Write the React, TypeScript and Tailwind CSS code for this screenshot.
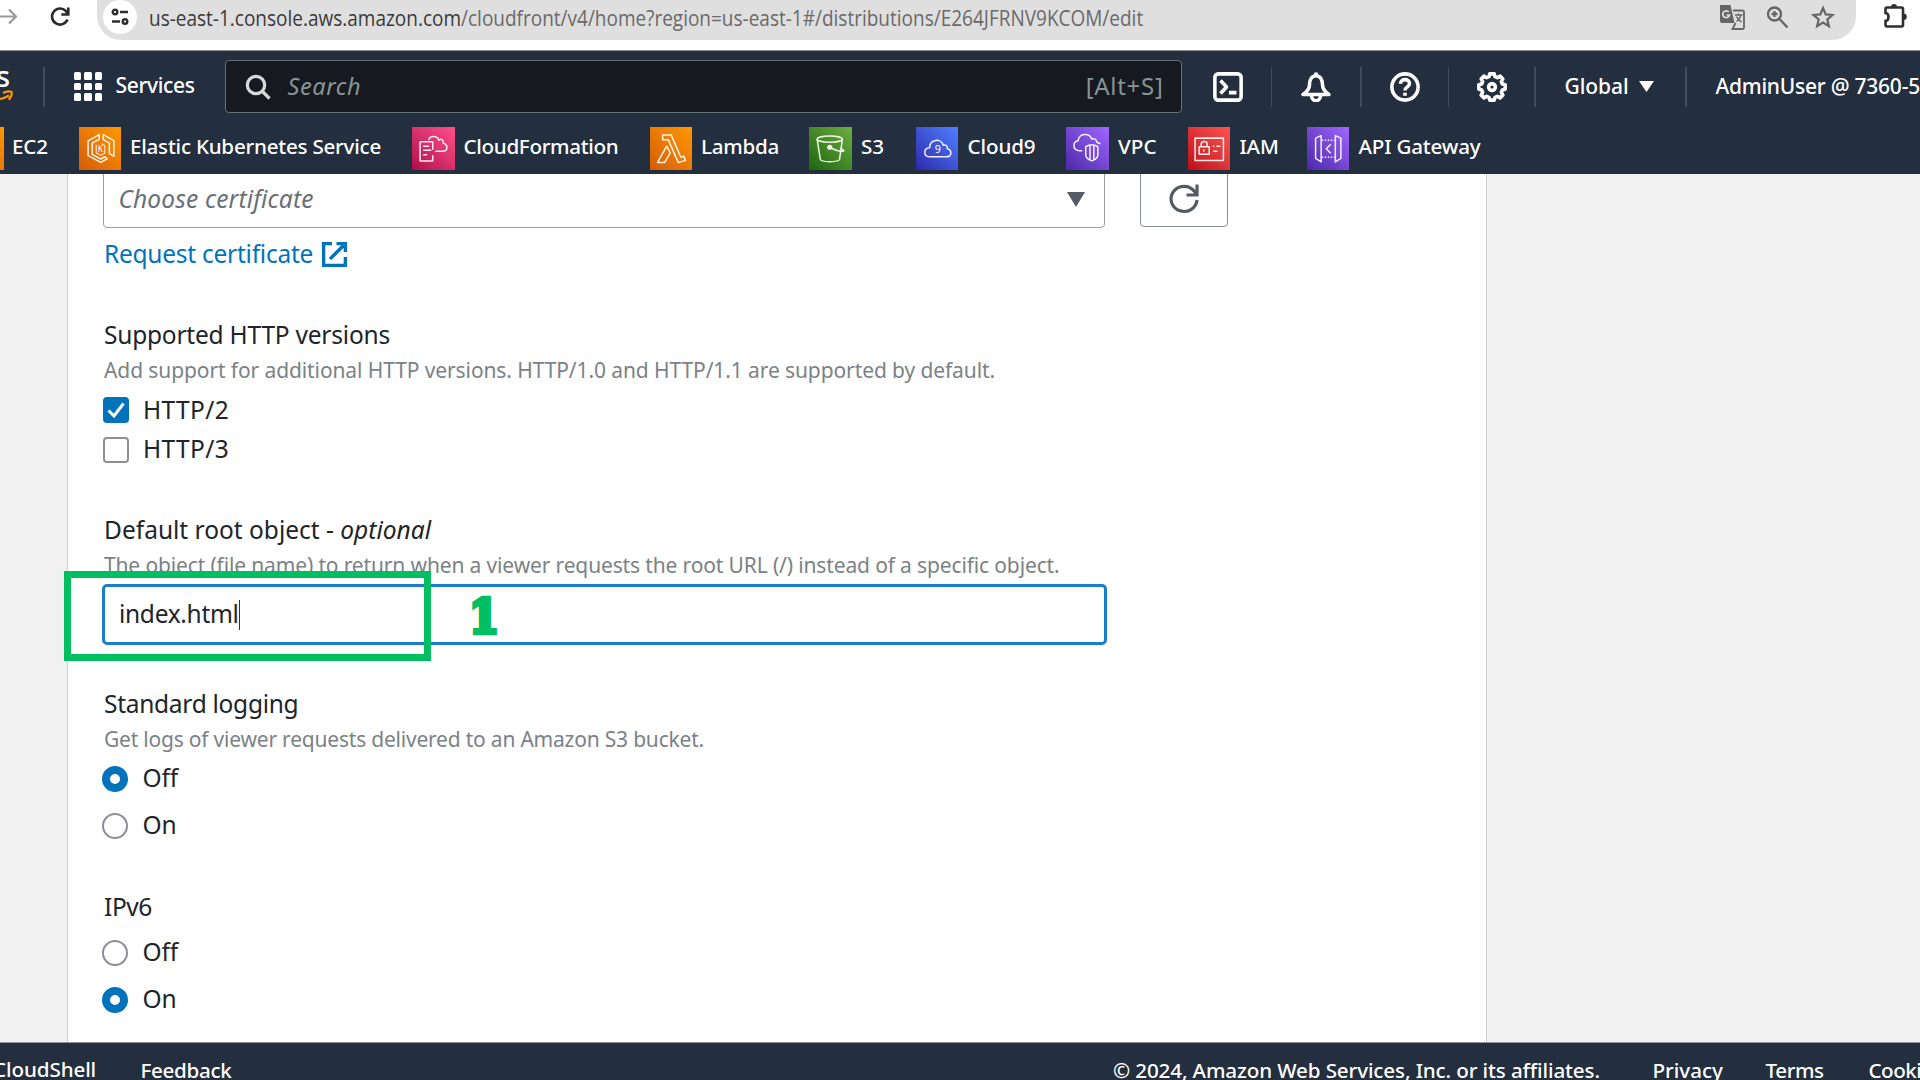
import type { ReactNode } from "react";

type Favorite = {
  label: string;
  item: string;
  tile: string;
  text: string;
  glyph: ReactNode;
};

const favorites: Favorite[] = [
  {
    label: "EC2",
    item: "w-[117.5px]",
    tile: "bg-linear-to-tr from-[#d45b07] to-[#ff9900]",
    text: "-translate-x-px tracking-[-0.1px]",
    glyph: <rect x="10" y="10" width="22" height="22" />,
  },
  {
    label: "Elastic Kubernetes Service",
    item: "w-[333.5px]",
    tile: "bg-linear-to-tr from-[#d45b07] to-[#ff9900]",
    text: "-translate-x-[0.5px] tracking-[-0.23px]",
    glyph: (
      <>
        <path d="M20 7.500 9 13.700v14.600l12.500 6.700 6.500-3.600-2.500-2-4 2.200-8.500-4.600V16l7-3.800z" />
        <path d="M24 7.500 34.500 13.500v15.500l-4.500-3V16l-6-3.500z" />
        <path d="M17 17.500v8l4.500 2.500 4-2.300v-7.500l-3-1.700" strokeWidth="1" />
        <text x="18.500" y="25" fontSize="8.500" fill="#fff" stroke="none" className="font-['Noto_Sans']">K</text>
      </>
    ),
  },
  {
    label: "CloudFormation",
    item: "w-[237.5px]",
    tile: "bg-linear-to-tr from-[#b0084d] to-[#ff4f8b]",
    text: "-translate-x-[0.5px] tracking-[-0.31px]",
    glyph: (
      <>
        <path d="M8 14.500h12.500v8M20.500 28v5.500H8v-19M11 19h6M11 23h8M11 27.500h4" />
        <path d="M16.500 13c1-4.500 8-5 10 0 3-2 4.500 0 4.500 3 5 1.500 4.500 8-.5 8H23" />
      </>
    ),
  },
  {
    label: "Lambda",
    item: "w-[159.5px]",
    tile: "bg-linear-to-tr from-[#d45b07] to-[#ff9900]",
    text: "-translate-x-[0.5px] tracking-[-0.27px]",
    glyph: (
      <>
        <path d="M12.500 8h8.500l9.500 22 3-1.200 1.500 4.200-7 2.200L18 12.500h-5.500z" />
        <path d="M16.500 19 7.500 35h7l5.500-9.500z" />
      </>
    ),
  },
  {
    label: "S3",
    item: "w-[106.5px]",
    tile: "bg-linear-to-tr from-[#1b660f] to-[#6cae3e]",
    text: "tracking-[-0.1px]",
    glyph: (
      <>
        <ellipse cx="20.500" cy="12" rx="12.500" ry="3" />
        <path d="M8 12l3.200 20c1 3 18 3 19 0L33 12" />
        <circle cx="20.500" cy="20" r="1.800" fill="#fff" />
        <path d="M20.500 20c5 3 12 5 14 3.500-.5-1.300-2-2-3-2.500" />
      </>
    ),
  },
  {
    label: "Cloud9",
    item: "w-[150.5px]",
    tile: "bg-linear-to-tr from-[#2e27ad] to-[#527fff]",
    text: "tracking-[-0.11px]",
    glyph: (
      <>
        <path d="M14 29.500c-7 0-7-8.500-.5-9 0-9 11.500-9.500 13.500-2.500 2.500-1 4 .5 4 3.500 5 1.500 4.500 8-1 8z" />
        <text x="18.500" y="25.500" fontSize="10.500" fill="#fff" stroke="none" className="font-['Noto_Sans']">9</text>
      </>
    ),
  },
  {
    label: "VPC",
    item: "w-[121.5px]",
    tile: "bg-linear-to-tr from-[#4d27a8] to-[#a166ff]",
    text: "tracking-[0.1px]",
    glyph: (
      <>
        <path d="M16 23.500h-3c-7.500-1-6-9.500-1-10 1-7.500 11-8 13.500-1.500 3-1.200 4.500.5 5 3l3.500 1.500" />
        <path d="M19.500 19.500c4-2.500 8-2.500 12 0v8c0 3-3 5-6 6-3-1-6-3-6-6zM23.700 18v14.500M27.500 18v14.500" />
      </>
    ),
  },
  {
    label: "IAM",
    item: "w-[119px]",
    tile: "bg-linear-to-tr from-[#bd0816] to-[#ff5252]",
    text: "tracking-[-0.2px]",
    glyph: (
      <>
        <path d="M7 11h28v22H7z" />
        <path d="M11 19.500h10v7.500H11zM13 19.500v-2.500c0-3.500 6-3.500 6 0v2.500M15.500 22v2.500M24.500 19h1.500M28 19h4M25 24h4" />
      </>
    ),
  },
  {
    label: "API Gateway",
    item: "w-[200px]",
    tile: "bg-linear-to-tr from-[#4d27a8] to-[#a166ff]",
    text: "tracking-[-0.18px]",
    glyph: (
      <>
        <path d="M14 8.500 8.500 11v20l5.500 3.500zM28 8.500l5.500 2.500v20L28 34.500zM23.500 17l-4.500 4.500 4.500 4.500" />
        <path d="M14.500 13h13M14.500 30h13" strokeDasharray="1.500 1.500" />
      </>
    ),
  },
];

function BrowserBar() {
  return (
    <div className="flex h-[50px] shrink-0 items-start overflow-hidden bg-white">
      <svg className="mt-[8px] h-[18px] w-[20px] shrink-0" viewBox="0 0 20 18" fill="none" stroke="#9b9b9b" strokeWidth="2.200">
        <path d="M0 8.500h16M9 1.500l7 7-7 7" />
      </svg>
      <svg className="mt-[6px] ml-[29px] h-[22px] w-[22px] shrink-0" viewBox="0 0 22 22" fill="none" stroke="#2b2b2b" strokeWidth="2.600">
        <path d="M18.500 13.500A8 8 0 1 1 17 5.200l1.500 2.300" />
        <path d="M19.300 1.500v7h-7" />
      </svg>
      <div className="-mt-[8px] ml-[26px] flex h-[48px] w-[1759px] shrink-0 items-center rounded-b-[24px] bg-[#dfdfdf] pt-[2px]">
        <div className="ml-[6px] flex size-[34px] items-center justify-center rounded-full bg-white">
          <svg className="size-[18px]" viewBox="0 0 18 18" fill="none" stroke="#2f2f2f" strokeWidth="2.400">
            <circle cx="4" cy="4" r="2.300" />
            <path d="M9 4h8M1 13.500h8" />
            <circle cx="14" cy="13.500" r="2.300" />
          </svg>
        </div>
        <div className="ml-[12px] w-[1500px] pt-px">
          <div className="w-max origin-left scale-x-[0.888] font-['Open_Sans',sans-serif] text-[21.4px] leading-[30px] whitespace-nowrap text-[#6a6a6a]">
            <span className="text-[#3a3a3a]">us-east-1.console.aws.amazon.com</span>
            /cloudfront/v4/home?region=us-east-1#/distributions/E264JFRNV9KCOM/edit
          </div>
        </div>
        <svg className="ml-[70px] size-[26px] shrink-0" viewBox="0 0 26 26" fill="none">
          <path d="M1 1h10.500l4 18H3a2 2 0 0 1-2-2z" fill="#666" />
          <path d="M14 6.500h9.500a1.500 1.500 0 0 1 1.500 1.500v15.500a1.500 1.500 0 0 1-1.500 1.500H13.500l3-6" stroke="#666" strokeWidth="1.800" />
          <path d="M16 11h7.500M19.500 9.500V11M22 11c-.6 3-2.500 5-4.500 6.500M17.500 12.500c1 2.500 3 4.500 5 5.500" stroke="#666" strokeWidth="1.400" />
          <path d="M9.800 8A3.400 3.400 0 1 0 10.500 11H7.500" stroke="#dfdfdf" strokeWidth="1.700" />
        </svg>
        <svg className="ml-[21px] size-[24px] shrink-0" viewBox="0 0 24 24" fill="none" stroke="#666" strokeWidth="2.300">
          <circle cx="8.500" cy="9" r="6.500" />
          <path d="M13.500 14l8 8.500M8.500 6v6M5.500 9h6" />
        </svg>
        <svg className="ml-[20px] size-[26px] shrink-0" viewBox="0 0 26 26" fill="none" stroke="#666" strokeWidth="2.200">
          <path d="M13 4l2.700 6.400 6.800.6-5.200 4.500 1.600 6.700L13 18.600l-5.900 3.600 1.600-6.700L3.500 11l6.800-.6z" />
        </svg>
      </div>
      <svg className="mt-[2px] ml-[26px] h-[28px] w-[28px] shrink-0" viewBox="0 0 28 28" fill="none">
        <path d="M3.500 7a1.500 1.500 0 0 1 1.500-1.500h14.500A1.500 1.500 0 0 1 21 7v16a1.500 1.500 0 0 1-1.500 1.500H5A1.500 1.500 0 0 1 3.500 23v-4c4-.5 4-7.500 0-8z" stroke="#2f2f2f" strokeWidth="2.600" />
        <path d="M9 5a3 3 0 0 1 6 0zM21.500 11.500a3.200 3.200 0 0 1 0 6.500z" fill="#2f2f2f" />
      </svg>
    </div>
  );
}

function Divider() {
  return <div className="h-[40px] w-[1.5px] shrink-0 bg-[#414d5c]" />;
}

function NavIcon({ children }: { children: ReactNode }) {
  return (
    <svg className="size-[30px] shrink-0" viewBox="0 0 16 16" fill="none" stroke="#fff" strokeWidth="1.900" strokeLinejoin="round">
      {children}
    </svg>
  );
}

function ConsoleHeader() {
  return (
    <header className="flex h-[124px] shrink-0 flex-col overflow-hidden border-t border-[#8d939b] bg-[#232f3e] text-white">
      <div className="flex h-[71px] shrink-0 items-center">
        <div className="flex h-[40px] w-[43px] shrink-0 flex-col overflow-hidden">
          <div className="-ml-[4px] h-[22px] text-[29px] leading-[17px] font-medium">s</div>
          <svg className="h-[18px] w-[16px]" viewBox="0 0 16 18" fill="none" stroke="#f90" strokeWidth="2.200">
            <path d="M0 10c3-.3 6-1.700 9-3.500" />
            <path d="M3 4c3.500-1.700 6.500-1.800 8.500-1.200.6 2-.3 5-2.700 8" />
          </svg>
        </div>
        <Divider />
        <div className="ml-[29px] grid size-[29px] shrink-0 grid-cols-3 gap-[3px]">
          {Array.from({ length: 9 }, (_, i) => (
            <span key={i} className="rounded-[1.5px] bg-white" />
          ))}
        </div>
        <span className="mb-[2px] ml-[13px] w-[109px] shrink-0 text-[21px] font-medium tracking-[-0.35px]">Services</span>
        <div className="flex h-[53px] w-[957px] shrink-0 items-center rounded-[4px] border-[1.5px] border-[#687078] bg-[#16191f] pr-[17px] pl-[19px]">
          <svg className="size-[26px]" viewBox="0 0 26 26" fill="none" stroke="#d5dbdb" strokeWidth="3.200">
            <circle cx="11" cy="11" r="8.700" />
            <path d="M17 17l7.500 7.500" />
          </svg>
          <span className="ml-[17px] text-[23.5px] tracking-[0.6px] text-[#879596] italic">Search</span>
          <span className="mb-[2px] ml-auto text-[24px] tracking-[0.7px] text-[#879596]">[Alt+S]</span>
        </div>
        <div className="ml-[31px] flex items-center">
          <NavIcon>
            <rect x="1" y="1" width="14" height="14" rx="1.800" />
            <path d="M4 4.500 7.200 8 4 11.500M8.500 11h4" />
          </NavIcon>
        </div>
        <div className="ml-[28px] flex items-center">
          <Divider />
          <div className="mx-[29px]">
            <NavIcon>
              <path d="M8 .2v2M8 2C5.600 2 4.500 4.500 4.500 7c0 2-1.100 3.300-3.400 5h13.800c-2.300-1.700-3.400-3-3.400-5 0-2.500-1.100-5-3.500-5zM5.500 12c0 4.400 5 4.400 5 0" />
            </NavIcon>
          </div>
          <Divider />
          <div className="mx-[28px]">
            <NavIcon>
              <circle cx="8" cy="8" r="7" />
              <path d="M5.600 6.300c0-3 4.800-3 4.800 0C10.400 8 8 7.900 8 9.800M8 11v1.600" />
            </NavIcon>
          </div>
          <Divider />
          <div className="mr-[27px] ml-[28px]">
            <NavIcon>
              <path d="M6.800 1h2.400l.4 1.500 1.300.5 1.400-.8 1.500 1.500-.8 1.400.5 1.300 1.500.4v2.400l-1.500.4-.5 1.300.8 1.400-1.500 1.500-1.400-.8-1.300.5L9.200 15H6.800l-.4-1.500-1.300-.5-1.400.8-1.500-1.500.8-1.400-.5-1.300L1 9.200V6.800l1.500-.4L3 5.100l-.8-1.400 1.500-1.500 1.400.8 1.300-.5z" />
              <circle cx="8" cy="8" r="1.800" />
            </NavIcon>
          </div>
          <Divider />
          <span className="ml-[29px] w-[74.5px] text-[21px] font-medium tracking-[-0.08px]">Global</span>
          <svg className="h-[11px] w-[15px]" viewBox="0 0 15 11">
            <path d="M0 0h15L7.500 11z" fill="#fff" />
          </svg>
          <div className="ml-[31px]">
            <Divider />
          </div>
          <span className="ml-[29px] text-[21px] font-medium tracking-[-0.24px] whitespace-nowrap">AdminUser @ 7360-5</span>
        </div>
      </div>
      <div className="-ml-[39px] flex h-[53px] w-[1700px] shrink-0 items-center">
        {favorites.map((f) => (
          <div key={f.label} className={`flex shrink-0 items-center ${f.item}`}>
            <div className={`size-[42.5px] shrink-0 ${f.tile}`}>
              <svg className="size-full" viewBox="0 0 42 42" fill="none" stroke="#fff" strokeOpacity="0.9" strokeWidth="1.500" strokeLinejoin="round">
                {f.glyph}
              </svg>
            </div>
            <span className={`mb-[4px] ml-[9.5px] text-[20.6px] font-medium whitespace-nowrap ${f.text}`}>{f.label}</span>
          </div>
        ))}
      </div>
    </header>
  );
}

function Radio({ label, checked, className }: { label: string; checked?: boolean; className: string }) {
  return (
    <div className={`flex h-[41px] items-center ${className}`}>
      <span
        className={
          checked
            ? "-ml-[2px] size-[26px] rounded-full border-8 border-[#0073bb] bg-white"
            : "-ml-[2px] size-[26px] rounded-full border-2 border-[#8b8f95] bg-white"
        }
      />
      <span className="ml-[14.5px] pb-px text-[24.5px] leading-[38px] tracking-[-0.1px]">{label}</span>
    </div>
  );
}

function SettingsForm() {
  return (
    <main className="flex h-[868px] shrink-0 bg-[#f1f1f1] pl-[67px]">
      <section className="relative flex h-full w-[1420px] flex-col overflow-hidden border-x-[1.5px] border-[#d0d0d0] bg-white pl-[36px] text-[#20242b]">
        <div className="-mt-[6px] flex h-[60px] shrink-0">
          <div className="-ml-[1.5px] flex w-[1002px] items-center rounded-[4px] border-[1.5px] border-[#9c9fa2] pr-[19px] pl-[15px]">
            <span className="pt-[2px] text-[24.5px] tracking-[0.15px] text-[#687078] italic">Choose certificate</span>
            <svg className="mt-[3px] ml-auto h-[15px] w-[18px]" viewBox="0 0 18 15">
              <path d="M0 0h18L9 15z" fill="#545b64" />
            </svg>
          </div>
          <div className="ml-[35px] flex h-[59px] w-[88px] items-center justify-center rounded-[4px] border-[1.5px] border-[#8b9096] pt-[3px]">
            <svg className="size-[32px]" viewBox="0 0 32 32" fill="none" stroke="#545b64" strokeWidth="3.200">
              <path d="M29 17A13 12.500 0 1 1 26.500 8.500L29 12" />
              <path d="M29 1.500V12H18.500" />
            </svg>
          </div>
        </div>
        <div className="mt-[8px] flex h-[36px] shrink-0 items-center text-[#0073bb]">
          <span className="pt-px text-[24.5px] tracking-[-0.25px]">Request certificate</span>
          <svg className="ml-[7.5px] size-[27px]" viewBox="0 0 27 27" fill="none" stroke="currentColor" strokeWidth="3.400">
            <path d="M11 2.600H2.600v21.800h21.800V16M15.500 2.600h8.900V11M24 3 9 18" />
          </svg>
        </div>

        <h3 className="mt-[44px] h-[37px] shrink-0 text-[24.5px] leading-[37px] tracking-[-0.22px]">Supported HTTP versions</h3>
        <p className="h-[34px] shrink-0 text-[21px] leading-[34px] tracking-[-0.1px] text-[#7b8287]">
          Add support for additional HTTP versions. HTTP/1.0 and HTTP/1.1 are supported by default.
        </p>
        <div className="mt-[3px] flex h-[40px] shrink-0 items-center">
          <span className="-ml-[1.5px] flex size-[26px] items-center justify-center rounded-[4px] bg-[#0073bb]">
            <svg className="size-[20px]" viewBox="0 0 20 20" fill="none" stroke="#fff" strokeWidth="3">
              <path d="M2.500 10.500 8 16 17.500 3.500" />
            </svg>
          </span>
          <span className="ml-[14.5px] text-[24.5px] tracking-[0.4px]">HTTP/2</span>
        </div>
        <div className="flex h-[39px] shrink-0 items-center">
          <span className="-ml-[1.5px] size-[26px] rounded-[4px] border-2 border-[#8b8f95] bg-white" />
          <span className="ml-[14.5px] pb-px text-[24.5px] tracking-[0.4px]">HTTP/3</span>
        </div>

        <h3 className="mt-[42px] h-[37px] shrink-0 text-[24.5px] leading-[37px]">
          Default root object - <i>optional</i>
        </h3>
        <p className="h-[34px] shrink-0 text-[21px] leading-[34px] tracking-[-0.14px] text-[#7b8287]">
          The object (file name) to return when a viewer requests the root URL (/) instead of a specific object.
        </p>
        <div className="relative mt-[2px] -ml-[2.5px] flex h-[61px] w-[1005px] shrink-0 items-center rounded-[5px] border-3 border-[#1a7fc8] pb-px pl-[14.5px]">
          <span className="text-[24.5px] tracking-[-0.3px]">index.html</span>
          <span className="mt-[2px] h-[30px] w-[1.5px] bg-[#333]" />
          <div className="absolute top-[6px] left-[364.5px] h-[48px] w-[30px]">
            <span className="block origin-left scale-x-[0.92] font-['DejaVu_Serif',serif] text-[47px] leading-[47px] font-bold text-[#00bf63] [-webkit-text-stroke:4.5px_#00bf63]">
              1
            </span>
          </div>
        </div>

        <h3 className="mt-[40px] h-[37px] shrink-0 text-[24.5px] leading-[37px] tracking-[-0.28px]">Standard logging</h3>
        <p className="h-[35px] shrink-0 text-[21px] leading-[35px] tracking-[-0.21px] text-[#7b8287]">
          Get logs of viewer requests delivered to an Amazon S3 bucket.
        </p>
        <Radio label="Off" checked className="mt-px" />
        <Radio label="On" className="mt-[6px]" />

        <h3 className="mt-[42px] h-[37px] shrink-0 text-[24.5px] leading-[37px] tracking-[-0.4px]">IPv6</h3>
        <Radio label="Off" className="mt-[7px]" />
        <Radio label="On" checked className="mt-[6px]" />
      </section>
    </main>
  );
}

function ConsoleFooter() {
  return (
    <footer className="flex h-[38px] shrink-0 items-start overflow-hidden border-t border-[#8d939b] bg-[#232f3e] text-[20.6px] leading-[54px] font-medium whitespace-nowrap text-white">
      <span className="-mt-px -ml-[7px] w-[147.5px] shrink-0 tracking-[-0.1px]">CloudShell</span>
      <span className="w-[972.5px] shrink-0 tracking-[-0.31px]">Feedback</span>
      <span className="w-[539.5px] shrink-0 tracking-[-0.12px]">© 2024, Amazon Web Services, Inc. or its affiliates.</span>
      <span className="w-[113px] shrink-0">Privacy</span>
      <span className="w-[103px] shrink-0 tracking-[-0.4px]">Terms</span>
      <span className="shrink-0 tracking-[-0.5px]">Cookie</span>
    </footer>
  );
}

export default function App() {
  return (
    <div className="relative flex h-[1080px] w-[1920px] flex-col overflow-hidden bg-[#232f3e] font-['Noto_Sans',sans-serif]">
      <BrowserBar />
      <ConsoleHeader />
      <SettingsForm />
      <ConsoleFooter />
      <div className="absolute top-[571px] left-[64px] h-[90px] w-[367px] border-7 border-[#00bf63]" />
    </div>
  );
}
